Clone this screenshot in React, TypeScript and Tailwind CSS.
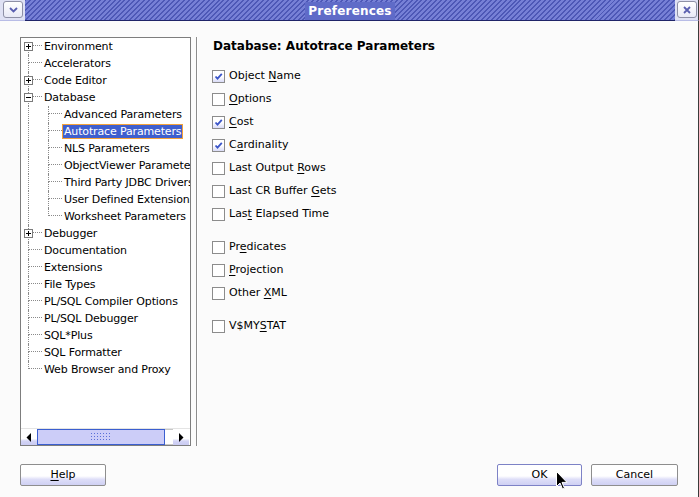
import { Fragment } from "react";

type TreeItem = {
  label: string;
  level: 1 | 2;
  box?: "+" | "-";
  selected?: boolean;
  first?: boolean;
  last?: boolean;
};

const treeItems: TreeItem[] = [
  { label: "Environment", level: 1, box: "+", first: true },
  { label: "Accelerators", level: 1 },
  { label: "Code Editor", level: 1, box: "+" },
  { label: "Database", level: 1, box: "-" },
  { label: "Advanced Parameters", level: 2 },
  { label: "Autotrace Parameters", level: 2, selected: true },
  { label: "NLS Parameters", level: 2 },
  { label: "ObjectViewer Parameters", level: 2 },
  { label: "Third Party JDBC Drivers", level: 2 },
  { label: "User Defined Extensions", level: 2 },
  { label: "Worksheet Parameters", level: 2, last: true },
  { label: "Debugger", level: 1, box: "+" },
  { label: "Documentation", level: 1 },
  { label: "Extensions", level: 1 },
  { label: "File Types", level: 1 },
  { label: "PL/SQL Compiler Options", level: 1 },
  { label: "PL/SQL Debugger", level: 1 },
  { label: "SQL*Plus", level: 1 },
  { label: "SQL Formatter", level: 1 },
  { label: "Web Browser and Proxy", level: 1, last: true },
];

// label, mnemonic index, checked
const groups: [string, number, boolean][][] = [
  [
    ["Object Name", 7, true],
    ["Options", 0, false],
    ["Cost", 0, true],
    ["Cardinality", 1, true],
    ["Last Output Rows", 12, false],
    ["Last CR Buffer Gets", 15, false],
    ["Last Elapsed Time", 3, false],
  ],
  [
    ["Predicates", 2, false],
    ["Projection", 0, false],
    ["Other XML", 6, false],
  ],
  [["V$MYSTAT", 4, false]],
];

const Mnemonic = ({ text, at }: { text: string; at: number }) => (
  <span>
    {text.slice(0, at)}
    <span className="underline underline-offset-2">{text[at]}</span>
    {text.slice(at + 1)}
  </span>
);

const ExpandBox = ({ sign }: { sign: "+" | "-" }) => (
  <span className="absolute left-[-4px] top-[4px] w-[9px] h-[9px] border border-[#7b7b7b] bg-white">
    <svg width="7" height="7" viewBox="0 0 7 7" className="block">
      <path d="M1 3.5h5" stroke="#000" strokeWidth="1" />
      {sign === "+" && <path d="M3.5 1v5" stroke="#000" strokeWidth="1" />}
    </svg>
  </span>
);

const Connector = ({ top, bottom, box }: { top: boolean; bottom: boolean; box?: "+" | "-" }) => (
  <div className="relative w-[14px] flex flex-col shrink-0">
    <div
      className={`h-[8px] border-b border-dotted border-[#8a8a8a] ${top ? "border-l" : ""}`}
    />
    <div className={`flex-1 border-dotted border-[#8a8a8a] ${bottom ? "border-l" : ""}`} />
    {box && <ExpandBox sign={box} />}
  </div>
);

const TreeRow = ({ item }: { item: TreeItem }) => (
  <div className="flex h-[17px] shrink-0">
    <div className="w-[7px] shrink-0" />
    {item.level === 2 && (
      <div className="w-[20px] shrink-0 border-l border-dotted border-[#8a8a8a]" />
    )}
    <Connector top={!item.first} bottom={!item.last} box={item.box} />
    <div className="flex items-center">
      <span
        className={`h-[15px] leading-[13px] px-[1px] border whitespace-nowrap tracking-[-0.15px] ${
          item.selected
            ? "bg-[#3f5fce] border-[#f4a23a] text-white"
            : "border-transparent"
        }`}
      >
        {item.label}
      </span>
    </div>
  </div>
);

const Checkbox = ({ checked }: { checked: boolean }) => (
  <span
    className={`w-[13px] h-[13px] border border-[#8c8c8c] shrink-0 ${
      checked
        ? "bg-[linear-gradient(to_bottom,#ffffff_0%,#ffffff_50%,#d9dbf7_100%)]"
        : "bg-white"
    }`}
  >
    {checked && (
      <svg width="11" height="11" viewBox="0 0 11 11" className="block">
        <path d="M2.5 5.5l2 2.2L8.8 2.8" fill="none" stroke="#3b55c8" strokeWidth="1.8" />
      </svg>
    )}
  </span>
);

const btnBg =
  "bg-[linear-gradient(to_bottom,#ffffff_0%,#ffffff_55%,#dedef8_72%,#cfd0f3_100%)]";

const ArrowButton = ({ dir }: { dir: "left" | "right" }) => (
  <div className="w-[16px] h-full flex items-center justify-center shrink-0 bg-[linear-gradient(to_bottom,#ffffff_0%,#ffffff_60%,#d3d4f5_75%,#c9caf2_100%)]">
    <svg width="6" height="9" viewBox="0 0 6 9">
      {dir === "left" ? <path d="M5 0v9L0.5 4.5z" fill="#000" /> : <path d="M1 0v9l4.5-4.5z" fill="#000" />}
    </svg>
  </div>
);

const App = () => {
  return (
    <div className="w-[699px] h-[497px] bg-[#fbfbfb] flex flex-col overflow-hidden font-['DejaVu_Sans',sans-serif] text-[11px] text-black">
      {/* title bar */}
      <div className="flex h-[21px] shrink-0">
        <div className="w-[25px] bg-[#dfe1f4] border-b border-[#b8bce6] flex items-start justify-center pt-[1px] pl-[1px]">
          <div className="w-[20px] h-[17px] rounded-[3px] border border-[#8e90a6] bg-[linear-gradient(to_bottom,#ffffff,#e8e9f6)] flex items-center justify-center">
            <svg width="9" height="6" viewBox="0 0 9 6">
              <path d="M1 1l3.5 3.5L8 1" fill="none" stroke="#5a5fb0" strokeWidth="1.8" />
            </svg>
          </div>
        </div>
        <div className="flex-1 flex items-end justify-center border-b border-[#1f2468] bg-[repeating-linear-gradient(135deg,#4d58b6_0px,#4d58b6_1.4px,#7680d6_1.4px,#7680d6_3.5px)]">
          <span className="bg-[#5f6bc8] px-[3px] text-white font-bold text-[12px] leading-[18px] tracking-[0.2px]">
            Preferences
          </span>
        </div>
        <div className="w-[24px] bg-[#dfe1f4] border-b border-[#b8bce6] border-r border-r-[#3a3a3a] flex items-start justify-center pt-[1px]">
          <div className="w-[20px] h-[17px] rounded-[3px] border border-[#8e90a6] bg-[linear-gradient(to_bottom,#ffffff,#e8e9f6)] flex items-center justify-center">
            <svg width="8" height="8" viewBox="0 0 8 8">
              <path d="M1 1l6 6M7 1l-6 6" stroke="#5a5fb0" strokeWidth="1.8" />
            </svg>
          </div>
        </div>
      </div>

      {/* body */}
      <div className="relative flex-1 flex flex-col border-r border-[#3a3a3a]">
        <div className="flex pl-[20px] pt-[16px]">
          {/* tree panel */}
          <div className="w-[171px] h-[409px] border border-[#7d7d7d] bg-white flex flex-col overflow-hidden">
            <div className="flex-1 flex flex-col overflow-hidden">
              {treeItems.map((item) => (
                <Fragment key={item.label}>
                  <TreeRow item={item} />
                </Fragment>
              ))}
            </div>
            <div className="h-[17px] flex shrink-0 border-t border-[#e4e4e4]">
              <ArrowButton dir="left" />
              <div className="w-[128px] h-full border border-[#3b5fd0] bg-[#cccdf8] flex items-center justify-center shrink-0">
                <div className="w-[22px] h-[10px] bg-[radial-gradient(circle,#5a6fd8_0.7px,transparent_0.8px)] bg-[length:3px_3px]" />
              </div>
              <div className="w-[8px] h-full bg-white border-y border-[#c8c8c8] shrink-0" />
              <ArrowButton dir="right" />
            </div>
          </div>

          {/* divider */}
          <div className="ml-[5px] w-[2px] h-[409px] border-l border-[#8d8d8d] bg-white" />

          {/* right content */}
          <div className="ml-[14px] flex flex-col">
            <div className="h-[18px] leading-[18px] pl-[1px] font-bold text-[12px] whitespace-nowrap">
              Database: Autotrace Parameters
            </div>
            <div className="mt-[10px] flex flex-col gap-[10px]">
              {groups.map((group, gi) => (
                <div key={gi} className="flex flex-col">
                  {group.map(([label, at, checked]) => (
                    <div key={label} className="h-[23px] flex items-center gap-[4px]">
                      <Checkbox checked={checked} />
                      <Mnemonic text={label} at={at} />
                    </div>
                  ))}
                </div>
              ))}
            </div>
          </div>
        </div>

        {/* buttons */}
        <div className="flex mt-[18px] pl-[20px] pr-[20px]">
          <button className={`w-[86px] h-[22px] border border-[#8e8e8e] rounded-[2px] ${btnBg}`}>
            <Mnemonic text="Help" at={0} />
          </button>
          <div className="flex-1" />
          <button className={`w-[85px] h-[22px] border border-[#7d82c6] rounded-[2px] ${btnBg}`}>
            OK
          </button>
          <button className={`ml-[9px] w-[87px] h-[22px] border border-[#8e8e8e] rounded-[2px] ${btnBg}`}>
            Cancel
          </button>
        </div>

        {/* mouse cursor */}
        <svg
          className="absolute left-[556px] top-[450px]"
          width="12"
          height="19"
          viewBox="0 0 12 19"
        >
          <path
            d="M0.5 0.5v15l3.5-3.5 2.5 6 2-0.8-2.5-5.8h5z"
            fill="#000"
            stroke="#fff"
            strokeWidth="1"
          />
        </svg>
      </div>
    </div>
  );
};

export default App;
